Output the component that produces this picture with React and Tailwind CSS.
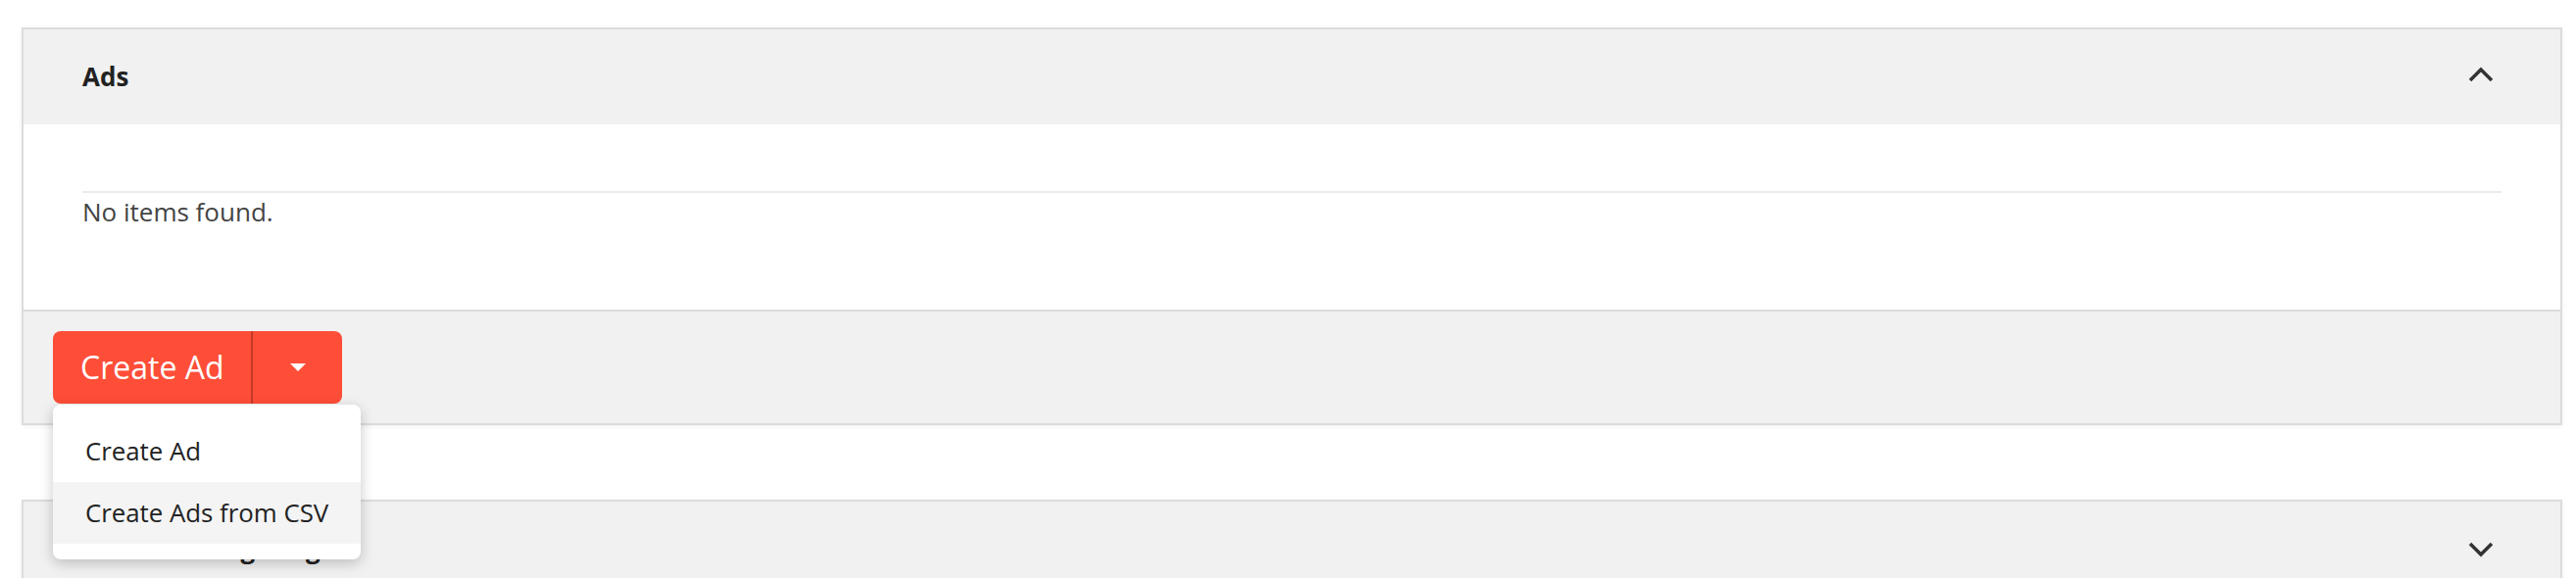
import { useState } from 'react';

function Chevron({ up }) {
  return (
    <svg width="26" height="16" viewBox="0 0 26 16" fill="none">
      {up ? (
        <polyline points="2,14 13,3 24,14" stroke="#333" strokeWidth="3.5" />
      ) : (
        <polyline points="2,2 13,13 24,2" stroke="#333" strokeWidth="3.5" />
      )}
    </svg>
  );
}

function PanelHeader({ title, open }) {
  return (
    <div className="flex h-[97px] items-center justify-between bg-[#f1f1f1] pl-[60px] pr-[68px]">
      <h2 className="text-[26px] font-bold text-[#222]">{title}</h2>
      <div className={open ? 'mb-[6px]' : 'mb-0'}>
        <Chevron up={open} />
      </div>
    </div>
  );
}

export default function App() {
  const [menuOpen] = useState(true);

  return (
    <div className="h-[590px] w-full overflow-hidden bg-white pl-[22px] pt-[28px] font-['Open_Sans',sans-serif]">
      {/* Ads panel */}
      <div className="w-[2592px] border-2 border-[#dcdcdc] shadow-[0_1px_5px_rgba(0,0,0,0.06)]">
        <PanelHeader title="Ads" open />

        <div className="bg-white px-[60px] pt-[68px] pb-[83px]">
          <div className="h-[2px] bg-[#ebebeb]" />
          <p className="mt-[2px] text-[26px] leading-[34px] text-[#444]">No items found.</p>
        </div>

        <div className="border-t-2 border-[#dcdcdc] bg-[#f1f1f1] pl-[30px] pt-[20px] pb-[20px]">
          <div className="relative inline-flex h-[74px] rounded-[8px] bg-[#fe4e38]">
            <button className="whitespace-nowrap px-[28px] text-[32px] text-white">Create Ad</button>
            <div className="w-[2px] bg-[#c53a27]" />
            <button className="flex w-[91px] items-center justify-center">
              <span className="h-0 w-0 border-x-[8px] border-t-[8px] border-x-transparent border-t-white" />
            </button>

            {menuOpen && (
              <div className="absolute left-0 top-[75px] z-10 w-[314px] rounded-[8px] bg-white py-[16px] shadow-[0_4px_14px_rgba(0,0,0,0.22)]">
                <div className="flex h-[63px] items-center whitespace-nowrap px-[33px] text-[25.8px] text-[#222]">
                  Create Ad
                </div>
                <div className="flex h-[63px] items-center whitespace-nowrap bg-[#f4f4f4] px-[33px] text-[25.8px] text-[#222]">
                  Create Ads from CSV
                </div>
              </div>
            )}
          </div>
        </div>
      </div>

      {/* next panel */}
      <div className="mt-[76px] w-[2592px] border-2 border-[#dcdcdc] shadow-[0_1px_5px_rgba(0,0,0,0.06)]">
        <PanelHeader title="Location Targeting" />
      </div>
    </div>
  );
}
